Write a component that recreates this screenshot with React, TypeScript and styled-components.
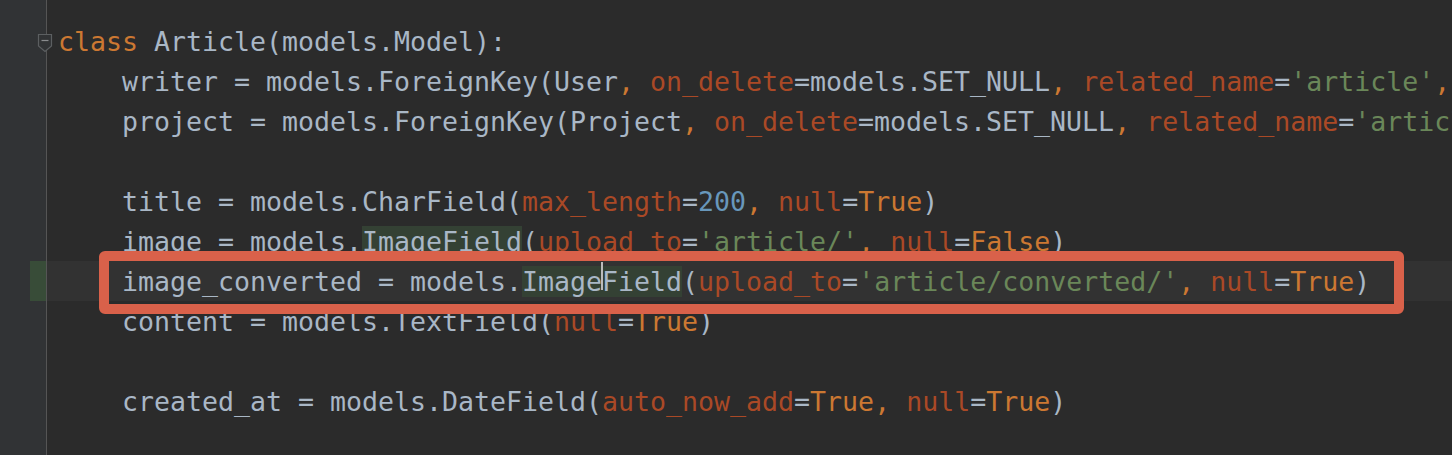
import React from "react";
import styled, { createGlobalStyle } from "styled-components";

const GlobalStyle = createGlobalStyle`
  html, body { margin: 0; padding: 0; background: #2b2b2b; }
  #root { width: 1452px; height: 455px; overflow: hidden; }
`;

const Editor = styled.div`
  position: relative;
  display: flex;
  width: 1452px;
  height: 455px;
  background: #2b2b2b;
  overflow: hidden;
  font-family: "DejaVu Sans Mono", "Liberation Mono", monospace;
  font-size: 26.58px;
`;

const Gutter = styled.div`
  width: 46px;
  flex: 0 0 46px;
  background: #313335;
  border-right: 1px solid #555555;
  padding-top: 21px;
  display: flex;
  flex-direction: column;
`;

const GutterRow = styled.div<{ $added?: boolean }>`
  position: relative;
  flex: 0 0 40px;
  height: 40px;
  display: flex;
  justify-content: flex-end;
  &::after {
    content: "";
    display: ${(p) => (p.$added ? "block" : "none")};
    width: 16px;
    height: 40px;
    background: #384c38;
  }
`;

const FoldMarker = styled.svg`
  position: absolute;
  left: 37px;
  top: 12px;
  z-index: 2;
`;

const Code = styled.div`
  flex: 1;
  padding-top: 21px;
  display: flex;
  flex-direction: column;
  min-width: 0;
`;

const Line = styled.div<{ $current?: boolean }>`
  flex: 0 0 40px;
  height: 40px;
  box-sizing: border-box;
  padding: 2px 0 0 11px;
  line-height: 38px;
  white-space: pre;
  color: #a9b7c6;
  background: ${(p) => (p.$current ? "#323232" : "transparent")};
`;

const Kw = styled.span`color: #cc7832;`;
const Param = styled.span`color: #aa4926;`;
const Str = styled.span`color: #6a8759;`;
const Num = styled.span`color: #6897bb;`;
const Usage = styled.span`background: #344134;`;

const Caret = styled.span`
  position: relative;
  display: inline-block;
  width: 0;
  height: 38px;
  vertical-align: top;
  &::after {
    content: "";
    position: absolute;
    left: -1px;
    top: -1px;
    width: 2px;
    height: 28px;
    background: #bbbbbb;
  }
`;

const Annotation = styled.div`
  position: absolute;
  left: 99px;
  top: 251px;
  width: 1305px;
  height: 63px;
  box-sizing: border-box;
  border: 10px solid #d9614a;
  border-radius: 6px;
  pointer-events: none;
`;

const C = () => <Kw>, </Kw>;

export default function App() {
  const rows = 11;
  return (
    <>
      <GlobalStyle />
      <Editor>
        <Gutter>
          {Array.from({ length: rows }).map((_, i) => (
            <GutterRow key={i} $added={i === 6}>
              {i === 0 && (
                <FoldMarker width="16" height="20" viewBox="0 0 16 20">
                  <path
                    d="M1.5 1.5 H14.5 V13 L8 18.5 L1.5 13 Z"
                    fill="#313335"
                    stroke="#5c5f61"
                    strokeWidth="1.2"
                  />
                  <path d="M4.5 7.5 H11.5" stroke="#8a8c8e" strokeWidth="1.2" />
                </FoldMarker>
              )}
            </GutterRow>
          ))}
        </Gutter>
        <Code>
          <Line>
            <Kw>class</Kw> Article(models.Model):
          </Line>
          <Line>
            {"    writer = models.ForeignKey(User"}
            <C />
            <Param>on_delete</Param>=models.SET_NULL
            <C />
            <Param>related_name</Param>=<Str>'article'</Str>
            <C />
            <Param>null</Param>=<Kw>True</Kw>)
          </Line>
          <Line>
            {"    project = models.ForeignKey(Project"}
            <C />
            <Param>on_delete</Param>=models.SET_NULL
            <C />
            <Param>related_name</Param>=<Str>'article'</Str>
            <C />
            <Param>null</Param>=<Kw>True</Kw>)
          </Line>
          <Line />
          <Line>
            {"    title = models.CharField("}
            <Param>max_length</Param>=<Num>200</Num>
            <C />
            <Param>null</Param>=<Kw>True</Kw>)
          </Line>
          <Line>
            {"    image = models."}
            <Usage>ImageField</Usage>(<Param>upload_to</Param>=<Str>'article/'</Str>
            <C />
            <Param>null</Param>=<Kw>False</Kw>)
          </Line>
          <Line $current>
            {"    image_converted = models."}
            <Usage>
              Image
              <Caret />
              Field
            </Usage>
            (<Param>upload_to</Param>=<Str>'article/converted/'</Str>
            <C />
            <Param>null</Param>=<Kw>True</Kw>)
          </Line>
          <Line>
            {"    content = models.TextField("}
            <Param>null</Param>=<Kw>True</Kw>)
          </Line>
          <Line />
          <Line>
            {"    created_at = models.DateField("}
            <Param>auto_now_add</Param>=<Kw>True</Kw>
            <C />
            <Param>null</Param>=<Kw>True</Kw>)
          </Line>
        </Code>
        <Annotation />
      </Editor>
    </>
  );
}
